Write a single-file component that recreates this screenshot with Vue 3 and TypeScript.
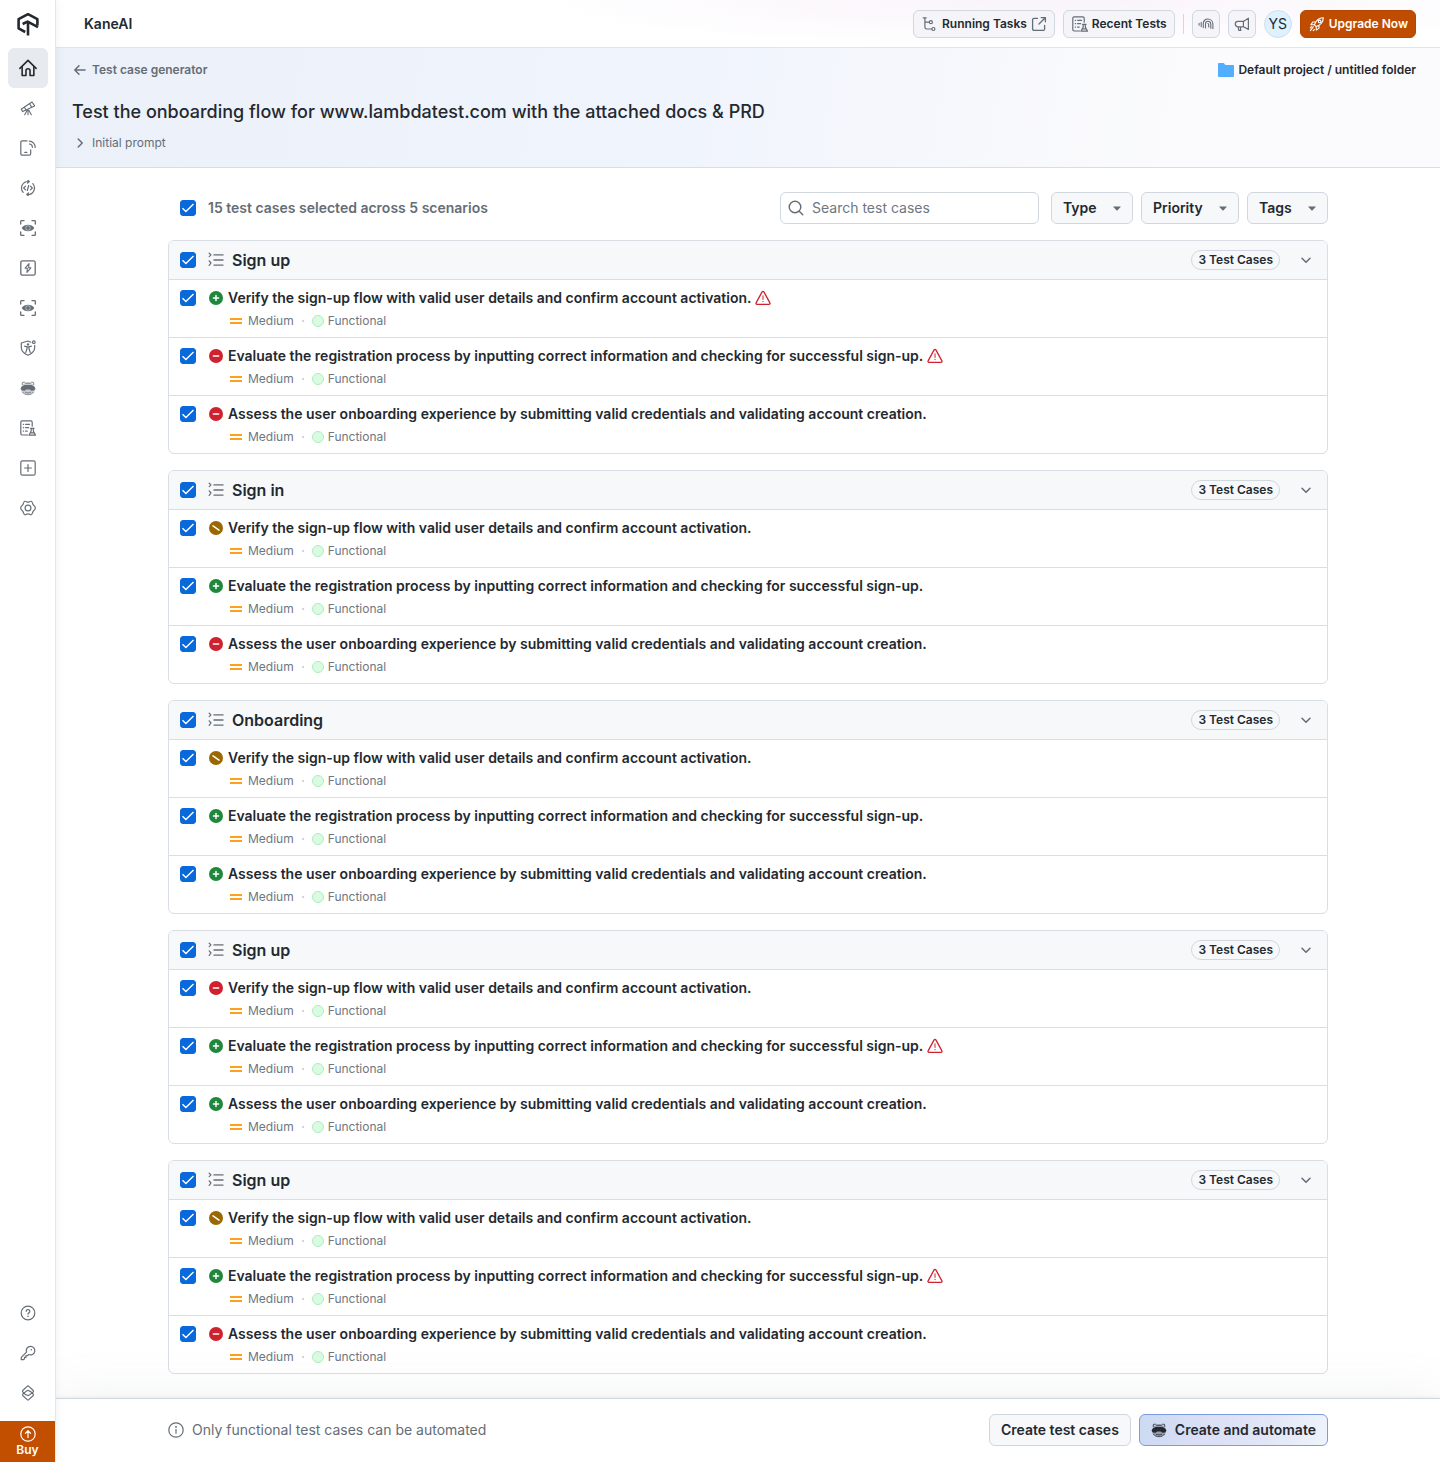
<script setup lang="ts">
import { computed, h, reactive, ref, type FunctionalComponent } from 'vue'

const round = 'fill="none" stroke="currentColor" stroke-linecap="round" stroke-linejoin="round"'

const glyphs: Record<string, string> = {
  home: `<g ${round} stroke-width="1.4"><path d="M.8 8.3 8 1.2l7.200 7.100"/><path d="M2.800 7v7.600h3.400v-4.200a1.800 1.800 0 0 1 3.600 0v4.200h3.400V7"/></g>`,
  telescope: `<g ${round} stroke-width="1.100"><path d="M1.200 9.300 12 2l2.600 3.900L2.700 11.600z"/><path d="m9.600 3.700 2 3.400M4.400 7.300l1.500 2.600M8 10v4.800M7.300 10l-2.600 4.800M8.700 10l2.600 4.800"/></g>`,
  device: `<g ${round} stroke-width="1.200"><path d="M7 .8H2.300A1.500 1.500 0 0 0 .8 2.300v11.400a1.500 1.500 0 0 0 1.500 1.500h6.900a1.500 1.500 0 0 0 1.500-1.500V9.800M4.800 12.400h2M9.400 1.200a6 6 0 0 1 5.800 6.200M9.400 4a3.300 3.300 0 0 1 3 3.300"/></g>`,
  codeCycle: `<g ${round} stroke-width="1.200"><path d="M9 1.500H8A6.500 6.500 0 0 0 3.200 12.300M7 14.500h1a6.500 6.500 0 0 0 4.800-10.800M7.600 0l1.700 1.500-1.700 1.500M8.500 13l-1.700 1.500L8.500 16M5.500 6.200 3.700 8l1.800 1.800M10.500 6.200 12.300 8l-1.800 1.800M8.700 5.500l-1.400 5"/></g>`,
  eye: `<g ${round} stroke-width="1.300"><path d="M.7 4V1.300C.7 1 1 .7 1.300.7H4M12 .7h2.700c.3 0 .6.3.6.6V4M15.300 12v2.700c0 .3-.3.6-.6.6H12M4 15.300H1.300c-.3 0-.6-.3-.6-.6V12"/></g><path fill="currentColor" d="M1.600 8C4.800 3.600 11.200 3.600 14.400 8 11.200 12.400 4.800 12.400 1.600 8z"/><circle cx="8" cy="8" r="2.300" fill="none" stroke="#fff" stroke-opacity=".6" stroke-width=".8"/>`,
  bolt: `<g ${round} stroke-width="1.300"><rect x=".8" y=".8" width="14.400" height="14.400" rx="1.800"/><path stroke-width="1.100" d="M9 3.600 5.100 8.200h2.300L6.900 12.400 10.900 7.800H8.600z"/></g>`,
  shield: `<g ${round} stroke-width="1.200"><path d="M10.800 2.200 8 1 1.300 3v4.600c0 3.600 2.600 6.100 6.700 7.600 4.100-1.500 6.700-4 6.700-7.600V5.300"/><circle cx="13.800" cy="2.200" r="1.300"/><path d="M4.600 6.200 7 6.800v2l-1.200 3.600M11.400 6.200 9 6.800v2l1.200 3.600M7 6.800h2"/></g><circle cx="8" cy="4.400" r="1.200" fill="currentColor"/>`,
  kane: `<ellipse cx="8" cy="8.600" rx="7" ry="6" fill="currentColor" opacity=".35"/><path fill="currentColor" d="M.5 8.400 2.100 6.200 4.600 5h6.800l2.500 1.200 1.600 2.200-1.300 2-2.700.3L9.700 9.500H6.300l-1.800 1.300-2.700-.3z"/><g ${round} stroke-width=".8"><path d="M2.200 4.600 2.400 2.400 4.400 2.200l1.200 1h4.800l1.200-1 2 .2.200 2.200M2.300 12.200c1.200 1.600 3.400 2.500 5.700 2.500s4.500-.9 5.700-2.500M5.400 12.300c1.600.8 3.600.8 5.200 0"/></g>`,
  tests: `<g ${round} stroke-width="1.200"><path d="M7.600 15H2.200A1.400 1.400 0 0 1 .8 13.600V2.200A1.400 1.400 0 0 1 2.200.8h8.600a1.400 1.400 0 0 1 1.400 1.400v4M3.300 4.300h.3M5.600 4.300h4M3.300 7.700h.3M5.600 7.700h3M3.300 11.100h.3M5.600 11.100h1.600M10.500 8.300h3.600M11.200 8.300v2.600L9 15.200h6.500l-2.200-4.300V8.300M10.200 12.800h4.200"/></g>`,
  plusBox: `<g ${round} stroke-width="1.200"><rect x=".8" y=".8" width="14.400" height="14.400" rx="1.800"/><path d="M8 4.600v6.800M4.600 8h6.800"/></g>`,
  gear: `<g ${round} stroke-width="1.200"><path d="M4.900 1.300c1.200-.4 1.700.9 3.100.9s1.900-1.300 3.100-.9c1.700.7 1.300 2.100 2 3.300s2.200 1.300 2.200 3.400-1.500 2.200-2.200 3.400-.3 2.600-2 3.300c-1.200.4-1.700-.9-3.100-.9s-1.900 1.300-3.100.9c-1.700-.7-1.300-2.100-2-3.300S.7 10.100.7 8s1.500-2.200 2.200-3.400.3-2.600 2-3.300z"/><circle cx="8" cy="8" r="2.900"/></g>`,
  help: `<g ${round} stroke-width="1.200"><circle cx="8" cy="8" r="6.800"/><path d="M6.200 6.300a1.800 1.800 0 1 1 2.700 1.600c-.6.300-.9.600-.9 1.200"/></g><circle cx="8" cy="11.300" r=".8" fill="currentColor"/>`,
  key: `<g ${round} stroke-width="1.200"><path d="M10.500 1.300a4.300 4.300 0 1 1-1.800 8.200L7.500 10.700H6v1.600H4.500v1.500l-.9.900H1.300v-2.400l5.200-5.200a4.300 4.300 0 0 1 4-5.800z"/></g><circle cx="11.300" cy="4.800" r=".8" fill="currentColor"/>`,
  layers: `<g ${round} stroke-width="1.200"><path d="M5 9.200 2.900 7c-.5-.6-.5-1.100 0-1.700L7.200 1.400c.5-.5 1.100-.5 1.600 0l4.300 3.900c.5.600.5 1.100 0 1.700L9.600 9.900c-1 .8-2.200.8-3.200 0z"/><path d="m11 6.800 2.100 2.200c.5.600.5 1.100 0 1.700l-4.300 3.900c-.5.500-1.100.5-1.600 0l-4.300-3.900c-.5-.6-.5-1.100 0-1.700l3.500-2.900c1-.8 2.200-.8 3.200 0z"/></g>`,
  upCircle: `<g ${round} stroke-width="1.200"><circle cx="8" cy="8" r="7.200"/><path d="M8 11.500V5M5.400 7.300 8 4.700l2.600 2.600"/></g>`,
  flow: `<g ${round} stroke-width="1.200"><path d="M1.200 1.800h3M2.900 1.800v9.500a1.700 1.700 0 0 0 1.700 1.700h5M2.900 6.200h4.300"/><circle cx="8.900" cy="6.200" r="1.500"/><circle cx="11.400" cy="13" r="1.500"/></g>`,
  external: `<g ${round} stroke-width="1.300"><path d="M6.500 2.400H3A1.400 1.400 0 0 0 1.600 3.800v9.200A1.400 1.400 0 0 0 3 14.400h9.200a1.400 1.400 0 0 0 1.400-1.400V9.500M8 8l6-6M10.200 1.600h4.200v4.200"/></g>`,
  waves: `<g ${round} stroke-width="1.100"><path d="M1.100 7.400v1.800M3.200 6.200v4.400M5.300 11.600V7.400C5.300 4.900 7.300 3 9.800 3c3 0 5.100 2.300 5.100 5.200v4.400M7.500 12V8c0-1.700 1-2.800 2.400-2.800 1.900 0 2.900 1.400 2.900 3.100v3.900M9.900 7.500c.5.200.8.600.8 1.200v2.200"/></g>`,
  megaphone: `<g ${round} stroke-width="1.200"><path d="M14.400 2.200v11.200l-5-2.600H4a2.700 2.700 0 0 1 0-5.400h5.400zM9.400 5.400v5.400M4 10.800l.8 3.600h2l-.6-3.600"/></g>`,
  rocket: `<g ${round} stroke-width="1.100"><path d="M5.400 8.800C7 4.500 10 1.700 14.300 1.700c0 4.300-2.800 7.300-7.100 8.900zM6.700 6H3.900L1.900 8.700l3.500.1M10 9.300v2.800L7.300 14.100l-.1-3.500M4.300 10.600l-2.900 4M1.300 11.900l1.200-1.200M4.200 14.700l1.200-1.200"/><circle cx="10.600" cy="5.400" r="1.300"/></g>`,
  back: `<path ${round} stroke-width="1.500" d="M13 8H3.200M7 3.800 2.800 8 7 12.200"/>`,
  right: `<path ${round} stroke-width="1.500" d="m6.200 4 4 4-4 4"/>`,
  down: `<path ${round} stroke-width="1.500" d="m4 6.200 4 4 4-4"/>`,
  folder: `<path fill="currentColor" d="M.8 1h5l1.600 1.900h7.800a.8.800 0 0 1 .8.800v10.500a.8.800 0 0 1-.8.800H.8a.8.800 0 0 1-.8-.8V1.800A.8.800 0 0 1 .8 1z"/>`,
  search: `<g ${round} stroke-width="1.400"><circle cx="7" cy="7" r="5.800"/><path d="m11.200 11.200 3.600 3.600"/></g>`,
  caret: `<path fill="currentColor" d="m4.400 7 3.250 3.400a.5.500 0 0 0 .7 0L11.600 7a.35.35 0 0 0-.3-.6H4.700a.35.35 0 0 0-.3.600z"/>`,
  scenario: `<g ${round} stroke-width="1.400"><path d="M6 2.900h9M6 8h9M6 13.100h9"/><path stroke-width="1.200" d="M1.200 1.200 3 2.900 1.200 4.600M1.200 8.800 3 11l-1.800 2.400"/></g>`,
  positive: `<circle cx="8" cy="8" r="7" fill="#1f883d"/><path stroke="#fff" stroke-width="1.500" stroke-linecap="round" d="M8 5.400v5.200M5.400 8h5.200"/>`,
  negative: `<circle cx="8" cy="8" r="7" fill="#cf222e"/><path stroke="#fff" stroke-width="1.500" stroke-linecap="round" d="M5.400 8h5.200"/>`,
  edge: `<circle cx="8" cy="8" r="7" fill="#9a6700"/><path stroke="#fff" stroke-width="1.500" stroke-linecap="round" d="m5 5.900 6 4.200"/>`,
  warning: `<g ${round} stroke-width="1.300"><path d="M7.100 1.900a1 1 0 0 1 1.800 0l6 11a1 1 0 0 1-.9 1.500H2a1 1 0 0 1-.9-1.500z"/><path stroke-width="1" d="M8 5.800v3.700"/></g><circle cx="8" cy="11.600" r=".7" fill="currentColor"/>`,
  medium: `<path fill="#ff9f1c" d="M2 5h12v2H2zM2 9h12v2H2z"/>`,
  info: `<g ${round} stroke-width="1.200"><circle cx="8" cy="8" r="7.200"/><path d="M8 7.600v3.600"/></g><circle cx="8" cy="5" r=".9" fill="currentColor"/>`,
}

const Icon: FunctionalComponent<{ name: string }> = (props) =>
  h('svg', { viewBox: '0 0 16 16', width: 16, height: 16, 'aria-hidden': 'true', innerHTML: glyphs[props.name] })
Icon.props = ['name']

const navTop = [
  { icon: 'home', label: 'Home' },
  { icon: 'telescope', label: 'Insights' },
  { icon: 'device', label: 'Real Device' },
  { icon: 'codeCycle', label: 'Automation' },
  { icon: 'eye', label: 'Visual' },
  { icon: 'bolt', label: 'HyperExecute' },
  { icon: 'eye', label: 'Visual UI' },
  { icon: 'shield', label: 'Accessibility' },
  { icon: 'kane', label: 'KaneAI' },
  { icon: 'tests', label: 'Test Manager' },
  { icon: 'plusBox', label: 'Integrations' },
  { icon: 'gear', label: 'Settings' },
]
const navBottom = [
  { icon: 'help', label: 'Help' },
  { icon: 'key', label: 'Credentials' },
  { icon: 'layers', label: 'Products' },
]

type Kind = 'positive' | 'negative' | 'edge'
interface TestCase { title: string; kind: Kind; warn: boolean; checked: boolean }
interface Scenario { name: string; open: boolean; cases: TestCase[] }

const titles = [
  'Verify the sign-up flow with valid user details and confirm account activation.',
  'Evaluate the registration process by inputting correct information and checking for successful sign-up.',
  'Assess the user onboarding experience by submitting valid credentials and validating account creation.',
]

function scenario(name: string, kinds: Kind[], warned: number[] = []): Scenario {
  return {
    name,
    open: true,
    cases: kinds.map((kind, i) => ({ title: titles[i], kind, warn: warned.includes(i), checked: true })),
  }
}

const scenarios = reactive<Scenario[]>([
  scenario('Sign up', ['positive', 'negative', 'negative'], [0, 1]),
  scenario('Sign in', ['edge', 'positive', 'negative']),
  scenario('Onboarding', ['edge', 'positive', 'positive']),
  scenario('Sign up', ['negative', 'positive', 'positive'], [1]),
  scenario('Sign up', ['edge', 'positive', 'negative'], [1]),
])

const filters = ['Type', 'Priority', 'Tags']
const query = ref('')

const isFull = (s: Scenario) => s.cases.every((c) => c.checked)
const selected = computed(() => scenarios.reduce((n, s) => n + s.cases.filter((c) => c.checked).length, 0))
const touched = computed(() => scenarios.filter((s) => s.cases.some((c) => c.checked)).length)
const allSelected = computed(() => scenarios.every(isFull))

function setScenario(s: Scenario, e: Event) {
  const on = (e.target as HTMLInputElement).checked
  s.cases.forEach((c) => (c.checked = on))
}
function setAll(e: Event) {
  scenarios.forEach((s) => setScenario(s, e))
}
</script>

<template>
  <div class="app">
    <aside class="sidebar">
      <a class="logo" href="#" aria-label="LambdaTest">
        <svg viewBox="0 0 24 24" width="24" height="24" fill="none" stroke="currentColor" stroke-width="2.600" stroke-linejoin="round">
          <path d="M9.200 20 2.600 16.400V7.200L12 2.200l9.400 5v6.200" />
          <path d="M6.600 12 11.600 9.600l10.400 5.600M12 9.800V23.400" />
        </svg>
      </a>
      <nav class="nav">
        <a v-for="(item, i) in navTop" :key="item.label" href="#" class="nav-item" :class="{ active: i === 0 }" :aria-label="item.label">
          <Icon :name="item.icon" />
        </a>
      </nav>
      <nav class="nav nav-bottom">
        <a v-for="item in navBottom" :key="item.label" href="#" class="nav-item" :aria-label="item.label">
          <Icon :name="item.icon" />
        </a>
      </nav>
      <a class="buy" href="#"><Icon name="upCircle" /><span>Buy</span></a>
    </aside>

    <div class="page">
      <header class="topbar">
        <span class="product">KaneAI</span>
        <div class="actions">
          <button type="button" class="btn btn-sm"><Icon name="flow" />Running Tasks<Icon name="external" /></button>
          <button type="button" class="btn btn-sm"><Icon name="tests" />Recent Tests</button>
          <span class="divider"></span>
          <button type="button" class="btn btn-sm btn-icon" aria-label="Activity"><Icon name="waves" /></button>
          <button type="button" class="btn btn-sm btn-icon" aria-label="Announcements"><Icon name="megaphone" /></button>
          <button type="button" class="avatar">YS</button>
          <button type="button" class="btn btn-sm btn-upgrade"><Icon name="rocket" />Upgrade Now</button>
        </div>
      </header>

      <section class="banner">
        <div class="crumbs">
          <a class="crumb" href="#"><Icon name="back" />Test case generator</a>
          <a class="project" href="#"><Icon name="folder" class="folder" />Default project / untitled folder</a>
        </div>
        <h1 class="title">Test the onboarding flow for www.lambdatest.com with the attached docs &amp; PRD</h1>
        <button type="button" class="prompt"><Icon name="right" />Initial prompt</button>
      </section>

      <main class="content">
        <div class="toolbar">
          <label class="summary">
            <input type="checkbox" class="check" :checked="allSelected" @change="setAll" />
            {{ selected }} test cases selected across {{ touched }} scenarios
          </label>
          <div class="search">
            <Icon name="search" />
            <input v-model="query" type="text" placeholder="Search test cases" aria-label="Search test cases" />
          </div>
          <div class="filters">
            <div v-for="f in filters" :key="f" class="filter">
              <select :aria-label="f"><option>{{ f }}</option></select>
              <Icon name="caret" class="caret" />
            </div>
          </div>
        </div>

        <section v-for="(s, si) in scenarios" :key="si" class="card">
          <div class="card-head">
            <input :id="`scenario-${si}`" type="checkbox" class="check" :checked="isFull(s)" @change="setScenario(s, $event)" />
            <Icon name="scenario" />
            <label class="card-name" :for="`scenario-${si}`">{{ s.name }}</label>
            <span class="count">{{ s.cases.length }} Test Cases</span>
            <button type="button" class="toggle" aria-label="Toggle scenario" :aria-expanded="s.open" @click="s.open = !s.open">
              <Icon name="down" />
            </button>
          </div>
          <template v-if="s.open">
            <div v-for="(c, ci) in s.cases" :key="ci" class="row">
              <input :id="`case-${si}-${ci}`" v-model="c.checked" type="checkbox" class="check" />
              <div class="row-body">
                <div class="row-title">
                  <Icon :name="c.kind" />
                  <label :for="`case-${si}-${ci}`">{{ c.title }}</label>
                  <Icon v-if="c.warn" name="warning" class="warn" />
                </div>
                <div class="meta">
                  <Icon name="medium" /><span>Medium</span>
                  <span class="dot"></span>
                  <span class="kind"></span><span>Functional</span>
                </div>
              </div>
            </div>
          </template>
        </section>
      </main>

      <footer class="footer">
        <div class="footer-inner">
          <span class="note"><Icon name="info" />Only functional test cases can be automated</span>
          <button type="button" class="btn">Create test cases</button>
          <button type="button" class="btn btn-auto"><Icon name="kane" />Create and automate</button>
        </div>
      </footer>
    </div>
  </div>
</template>

<style>
body {
  margin: 0;
  background: #fff;
}
</style>

<style scoped>
.app {
  display: flex;
  min-height: 100vh;
  font-family: Inter, "Liberation Sans", sans-serif;
  font-size: 14px;
  line-height: 20px;
  color: #24292f;
}
.app *,
.app *::before,
.app *::after {
  box-sizing: border-box;
}
a {
  color: inherit;
  text-decoration: none;
}
button,
input,
select {
  margin: 0;
  font: inherit;
  color: inherit;
}
svg {
  display: block;
  flex: none;
}

.sidebar {
  position: relative;
  z-index: 1;
  display: flex;
  flex: none;
  flex-direction: column;
  width: 56px;
  background: #fff;
  border-right: 1px solid #e4e7eb;
  box-shadow: 0 0 8px rgba(140, 149, 159, 0.15);
}
.logo {
  display: flex;
  align-items: center;
  justify-content: center;
  height: 48px;
}
.nav {
  display: flex;
  flex-direction: column;
  align-items: center;
  color: #656d76;
}
.nav-item {
  display: flex;
  align-items: center;
  justify-content: center;
  width: 40px;
  height: 40px;
  border-radius: 6px;
}
.nav-item.active {
  background: #e7eaee;
  color: #24292f;
}
.nav-item.active svg {
  width: 18px;
  height: 18px;
}
.nav-bottom {
  margin-top: auto;
  margin-bottom: 8px;
}
.buy {
  display: flex;
  flex-direction: column;
  align-items: center;
  justify-content: center;
  height: 41px;
  background: #c24f00;
  color: #fff;
  font-size: 12px;
  font-weight: 600;
  line-height: 16px;
}

.page {
  display: flex;
  flex: 1;
  flex-direction: column;
  min-width: 0;
}
.topbar {
  display: flex;
  align-items: center;
  justify-content: space-between;
  height: 48px;
  padding: 0 24px 0 28px;
  border-bottom: 1px solid #e1e4e9;
  background: radial-gradient(ellipse 520px 48px at 72% 0, #f9f3fa, #fff);
}
.product {
  font-weight: 600;
}
.actions {
  display: flex;
  align-items: center;
  gap: 8px;
}
.btn {
  display: flex;
  align-items: center;
  justify-content: center;
  gap: 8px;
  height: 32px;
  padding: 0 11px;
  border: 1px solid #d0d7de;
  border-radius: 6px;
  background: #f6f8fa;
  font-weight: 600;
  white-space: nowrap;
}
.btn-sm {
  gap: 4px;
  height: 28px;
  padding: 0 7px 0 8px;
  background: #f5f5f9;
  font-size: 12px;
}
.btn-sm svg {
  color: #656d76;
}
.btn-icon {
  width: 28px;
  padding: 0;
}
.btn-upgrade {
  border-color: #b54700;
  background: #bf4c00;
  color: #fff;
}
.btn-upgrade svg {
  color: #fff;
}
.divider {
  width: 1px;
  height: 20px;
  background: #d0d7de;
}
.avatar {
  width: 28px;
  height: 28px;
  padding: 0;
  border: 1px solid #cfe0ef;
  border-radius: 50%;
  background: #ddf1ff;
  text-align: center;
}

.banner {
  padding: 12px 24px 15px 16px;
  border-bottom: 1px solid #d8dee4;
  background: linear-gradient(100deg, #ecf1f9 0%, #f0f4fd 45%, #f7f8fc 66%, #fbfbfd 82%);
}
.crumbs {
  display: flex;
  align-items: center;
  justify-content: space-between;
  font-size: 12px;
}
.crumb,
.project,
.prompt {
  display: flex;
  align-items: center;
  gap: 4px;
}
.crumb {
  color: #656d76;
  font-weight: 600;
}
.project {
  font-weight: 600;
}
.folder {
  color: #54aeff;
}
.title {
  margin: 18px 0 8px;
  font-size: 18px;
  font-weight: 500;
  line-height: 28px;
}
.prompt {
  padding: 0;
  border: 0;
  background: none;
  color: #656d76;
  font-size: 12px;
  line-height: 18px;
}

.content {
  display: flex;
  flex: 1;
  flex-direction: column;
  gap: 16px;
  width: 100%;
  max-width: 1208px;
  margin: 0 auto;
  padding: 24px;
}
.toolbar {
  display: flex;
  align-items: center;
  gap: 12px;
}
.summary {
  display: flex;
  flex: 1;
  align-items: center;
  gap: 12px;
  padding-left: 12px;
  color: #656d76;
  font-weight: 600;
}
.check {
  flex: none;
  width: 16px;
  height: 16px;
  appearance: none;
  border: 1px solid #8c959f;
  border-radius: 3px;
  background: #fff;
}
.check:checked {
  border-color: #0969da;
  background: #0969da url("data:image/svg+xml,%3Csvg xmlns='http://www.w3.org/2000/svg' viewBox='0 0 14 14'%3E%3Cpath d='m1.500 7.200 3.400 3.400 7.600-7.600' fill='none' stroke='%23fff' stroke-width='1.400'/%3E%3C/svg%3E") center / 14px no-repeat;
}
.search {
  display: flex;
  align-items: center;
  gap: 8px;
  width: 259px;
  height: 32px;
  padding: 0 7px;
  border: 1px solid #d0d7de;
  border-radius: 6px;
  background: #fff;
  color: #656d76;
}
.search input {
  flex: 1;
  min-width: 0;
  padding: 0;
  border: 0;
  outline: 0;
  background: none;
}
.search input::placeholder {
  color: #6e7781;
  opacity: 1;
}
.filters {
  display: flex;
  gap: 8px;
}
.filter {
  position: relative;
}
.filter select {
  display: block;
  height: 32px;
  padding: 0 35px 0 11px;
  appearance: none;
  border: 1px solid #d0d7de;
  border-radius: 6px;
  background: #f6f8fa;
  font-weight: 600;
}
.caret {
  position: absolute;
  top: 8px;
  right: 8px;
  color: #656d76;
  pointer-events: none;
}

.card {
  border: 1px solid #d8dee4;
  border-radius: 6px;
  overflow: hidden;
  background: #fff;
}
.card-head {
  display: flex;
  align-items: center;
  height: 39px;
  padding: 0 7px 0 11px;
  border-bottom: 1px solid #d8dee4;
  background: #f6f8fa;
  color: #656d76;
}
.card-head .check {
  margin-right: 12px;
}
.card-name {
  flex: 1;
  margin-left: 8px;
  color: #24292f;
  font-size: 16px;
  font-weight: 600;
}
.count {
  padding: 0 6px;
  border: 1px solid #d0d7de;
  border-radius: 10px;
  color: #24292f;
  font-size: 12px;
  font-weight: 600;
  line-height: 18px;
}
.toggle {
  display: flex;
  align-items: center;
  justify-content: center;
  width: 28px;
  height: 28px;
  margin-left: 12px;
  padding: 0;
  border: 0;
  background: none;
}
.row {
  display: flex;
  gap: 12px;
  padding: 8px 11px 7px;
}
.row + .row {
  border-top: 1px solid #d8dee4;
}
.row .check {
  margin-top: 2px;
}
.row-title {
  display: flex;
  align-items: center;
  gap: 4px;
  font-weight: 600;
}
.warn {
  color: #cf222e;
}
.meta {
  display: flex;
  align-items: center;
  gap: 4px;
  margin-top: 4px;
  padding-left: 20px;
  color: #6e7781;
  font-size: 12px;
  line-height: 18px;
}
.dot {
  width: 2px;
  height: 2px;
  margin: 0 4px;
  border-radius: 50%;
  background: #c4cad1;
}
.kind {
  width: 12px;
  height: 12px;
  border: 1px solid #aceebb;
  border-radius: 50%;
  background: #dafbe1;
}

.footer {
  position: relative;
  border-top: 1px solid #d0d7de;
  background: #fff;
  box-shadow: 0 -1px 3px rgba(140, 149, 159, 0.12), 0 -4px 48px rgba(140, 149, 159, 0.12);
}
.footer-inner {
  display: flex;
  align-items: center;
  gap: 8px;
  width: 100%;
  max-width: 1208px;
  margin: 0 auto;
  padding: 15px 24px 16px;
}
.note {
  display: flex;
  flex: 1;
  align-items: center;
  gap: 8px;
  color: #656d76;
}
.btn-auto {
  border-color: #7d9be0;
  background: linear-gradient(100deg, #cbdaf3 0%, #dcdff5 35%, #e0e5f7 65%, #eff3fa 100%);
}
</style>
